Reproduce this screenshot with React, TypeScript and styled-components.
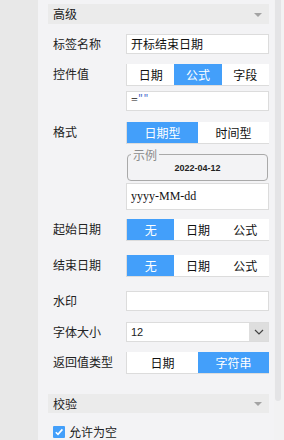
import styled, { createGlobalStyle } from 'styled-components';

const GlobalStyle = createGlobalStyle`
  html, body {
    margin: 0;
    padding: 0;
    background: #f3f3f5;
  }
  body {
    font-family: "Noto Sans CJK SC", "Liberation Sans", sans-serif;
    font-size: 12px;
    color: #222;
  }
`;

const blue = '#439ffa';
const line = '#dcdcdc';

const Page = styled.div`
  display: flex;
  width: 284px;
  height: 440px;
  overflow: hidden;
`;

const SideStrip = styled.div`
  width: 38px;
  flex-shrink: 0;
  background: #e8e8e8;
`;

const Panel = styled.div`
  width: 236px;
  flex-shrink: 0;
  box-sizing: border-box;
  padding: 4px 5px 0 10px;
  background: #f3f3f5;
  display: flex;
  flex-direction: column;
`;

const ScrollTrack = styled.div`
  width: 10px;
  flex-shrink: 0;
  background: #f2f2f3;
  position: relative;
`;

const ScrollThumb = styled.div`
  position: absolute;
  left: 1px;
  top: 0;
  width: 6px;
  height: 401px;
  border-radius: 0 0 3px 3px;
  background: #e4e4e6;
`;

const SectionHeader = styled.div<{ $mt?: number }>`
  height: 20px;
  margin-top: ${p => p.$mt ?? 0}px;
  background: #ebebeb;
  display: flex;
  align-items: center;
  justify-content: space-between;
  padding: 0 7px 0 5px;
  font-size: 12px;
  color: #222;
`;

const Caret = styled.span`
  width: 0;
  height: 0;
  border-left: 4px solid transparent;
  border-right: 4px solid transparent;
  border-top: 4px solid #a3a3a3;
  margin-top: 2px;
`;

const Row = styled.div<{ $mt: number }>`
  display: flex;
  margin-top: ${p => p.$mt}px;
`;

const Label = styled.div`
  width: 78px;
  flex-shrink: 0;
  box-sizing: border-box;
  padding-left: 5px;
  line-height: 20px;
  white-space: nowrap;
`;

const Field = styled.div`
  flex: 1;
  display: flex;
  flex-direction: column;
`;

const TextBox = styled.div<{ $mt?: number; $h?: number; $code?: boolean }>`
  height: ${p => p.$h ?? 20}px;
  margin-top: ${p => p.$mt ?? 0}px;
  box-sizing: border-box;
  border: 1px solid ${line};
  background: #fff;
  display: flex;
  align-items: center;
  padding-left: 4px;
  font-size: 12px;
  font-family: ${p => (p.$code ? '"Liberation Serif", serif' : 'inherit')};
  color: #111;
`;

const Quote = styled.span`
  color: #3a63c9;
  font-family: "Liberation Mono", monospace;
  font-size: 9px;
  align-self: flex-start;
  margin-top: 2px;
`;

const Segmented = styled.div<{ $mt?: number }>`
  display: flex;
  height: 22px;
  margin-top: ${p => p.$mt ?? 0}px;
  box-sizing: border-box;
  border-left: 1px solid ${line};
  border-bottom: 1px solid ${line};
  background: #fff;
`;

const Segment = styled.div<{ $active?: boolean }>`
  flex: 1;
  display: flex;
  align-items: center;
  justify-content: center;
  background: ${p => (p.$active ? blue : '#fff')};
  color: ${p => (p.$active ? '#fff' : '#111')};
  font-size: 12px;
`;

const Sample = styled.fieldset`
  margin: 5px 1px 0 1px;
  padding: 0;
  height: 32px;
  box-sizing: border-box;
  border: 1px solid #a9a9a9;
  border-radius: 4px;
  display: flex;
  align-items: center;
  justify-content: center;
`;

const SampleLegend = styled.legend`
  margin-left: 3px;
  padding: 0 2px;
  font-size: 12px;
  line-height: 12px;
  color: #8c8c8c;
`;

const SampleDate = styled.div`
  font-family: "Liberation Sans", Arial, sans-serif;
  font-weight: bold;
  font-size: 9px;
  color: #222;
  margin-top: 2px;
  width: 100%;
  text-align: center;
`;

const Select = styled.div`
  display: flex;
  height: 20px;
  box-sizing: border-box;
  border: 1px solid ${line};
  background: #fff;
`;

const SelectValue = styled.div`
  flex: 1;
  padding-left: 4px;
  display: flex;
  align-items: center;
  font-size: 11px;
  font-family: "Liberation Sans", Arial, sans-serif;
`;

const SelectButton = styled.div`
  width: 19px;
  background: #dedede;
  display: flex;
  align-items: center;
  justify-content: center;
`;

const CheckRow = styled.label`
  display: flex;
  align-items: center;
  gap: 4px;
  margin-top: 10px;
  padding-left: 5px;
  font-size: 12px;
`;

const CheckBox = styled.span`
  width: 12px;
  height: 12px;
  background: ${blue};
  border-radius: 1px;
  display: flex;
  align-items: center;
  justify-content: center;
`;

const SegGroup = ({ items, active, mt }: { items: string[]; active: number; mt?: number }) => (
  <Segmented $mt={mt}>
    {items.map((t, i) => (
      <Segment key={t} $active={i === active}>
        {t}
      </Segment>
    ))}
  </Segmented>
);

const App = () => {
  return (
    <>
      <GlobalStyle />
      <Page>
        <SideStrip />
        <Panel>
          <SectionHeader>
            <span>高级</span>
            <Caret />
          </SectionHeader>

          <Row $mt={10}>
            <Label>标签名称</Label>
            <Field>
              <TextBox>开标结束日期</TextBox>
            </Field>
          </Row>

          <Row $mt={10}>
            <Label>控件值</Label>
            <Field>
              <SegGroup items={['日期', '公式', '字段']} active={1} />
              <TextBox $mt={5} $code>
                =<Quote>""</Quote>
              </TextBox>
            </Field>
          </Row>

          <Row $mt={11}>
            <Label>格式</Label>
            <Field>
              <SegGroup items={['日期型', '时间型']} active={0} />
              <Sample>
                <SampleLegend>示例</SampleLegend>
                <SampleDate>2022-04-12</SampleDate>
              </Sample>
              <TextBox $mt={2} $h={27} $code>
                yyyy-MM-dd
              </TextBox>
            </Field>
          </Row>

          <Row $mt={9}>
            <Label>起始日期</Label>
            <Field>
              <SegGroup items={['无', '日期', '公式']} active={0} />
            </Field>
          </Row>

          <Row $mt={14}>
            <Label>结束日期</Label>
            <Field>
              <SegGroup items={['无', '日期', '公式']} active={0} />
            </Field>
          </Row>

          <Row $mt={14}>
            <Label>水印</Label>
            <Field>
              <TextBox />
            </Field>
          </Row>

          <Row $mt={11}>
            <Label>字体大小</Label>
            <Field>
              <Select>
                <SelectValue>12</SelectValue>
                <SelectButton>
                  <svg width="10" height="6" viewBox="0 0 10 6">
                    <path d="M1 1 L5 5 L9 1" fill="none" stroke="#444" strokeWidth="1.2" />
                  </svg>
                </SelectButton>
              </Select>
            </Field>
          </Row>

          <Row $mt={10}>
            <Label>返回值类型</Label>
            <Field>
              <SegGroup items={['日期', '字符串']} active={1} />
            </Field>
          </Row>

          <SectionHeader $mt={20}>
            <span>校验</span>
            <Caret />
          </SectionHeader>

          <CheckRow>
            <CheckBox>
              <svg width="10" height="10" viewBox="0 0 10 10">
                <path d="M1.8 5.2 L4 7.4 L8.4 2.4" fill="none" stroke="#fff" strokeWidth="1.6" />
              </svg>
            </CheckBox>
            允许为空
          </CheckRow>
        </Panel>
        <ScrollTrack>
          <ScrollThumb />
        </ScrollTrack>
      </Page>
    </>
  );
};

export default App;
